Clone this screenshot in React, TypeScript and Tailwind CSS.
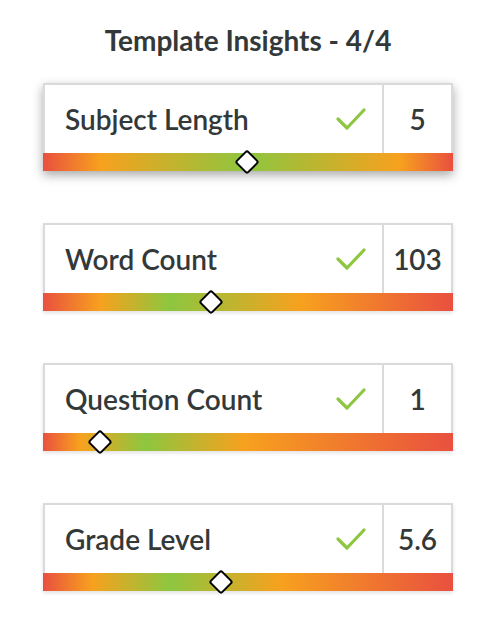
type Insight = {
  label: string;
  value: string;
  pos: number;
  gradient: string;
  active?: boolean;
};

const RED = "#e9503f";
const ORANGE = "#f7a11e";
const GREEN = "#8dc63f";

const insights: Insight[] = [
  {
    label: "Subject Length",
    value: "5",
    pos: 49.7,
    gradient: `linear-gradient(90deg, ${RED} 0%, ${ORANGE} 14%, ${GREEN} 50%, ${ORANGE} 87%, ${RED} 100%)`,
    active: true,
  },
  {
    label: "Word Count",
    value: "103",
    pos: 41,
    gradient: `linear-gradient(90deg, ${RED} 0%, ${ORANGE} 14%, ${GREEN} 31%, ${ORANGE} 63%, ${RED} 100%)`,
  },
  {
    label: "Question Count",
    value: "1",
    pos: 14,
    gradient: `linear-gradient(90deg, ${RED} 0%, ${ORANGE} 9%, ${GREEN} 25%, ${ORANGE} 49%, ${RED} 100%)`,
  },
  {
    label: "Grade Level",
    value: "5.6",
    pos: 43.4,
    gradient: `linear-gradient(90deg, ${RED} 0%, ${ORANGE} 12%, ${GREEN} 31%, ${ORANGE} 58%, ${RED} 100%)`,
  },
];

function CheckMark() {
  return (
    <svg width="32" height="24" viewBox="0 0 32 24" fill="none">
      <polyline
        points="3,12 12,21 29,3"
        stroke="#8dc63f"
        strokeWidth="3.2"
        strokeLinecap="round"
        strokeLinejoin="round"
      />
    </svg>
  );
}

function InsightCard({ item }: { item: Insight }) {
  return (
    <div
      className={`w-[410px] bg-white ${
        item.active
          ? "shadow-[0_4px_10px_rgba(0,0,0,0.35)]"
          : "shadow-[0_2px_4px_rgba(0,0,0,0.12)]"
      }`}
    >
      <div className="flex h-[70px] border-x-2 border-t-2 border-[#dadada]">
        <div className="flex flex-1 items-center justify-between pl-5 pr-[15px]">
          <span className="text-[28px] font-semibold text-[#333839]">
            {item.label}
          </span>
          <CheckMark />
        </div>
        <div className="flex w-[69px] items-center justify-center border-l-2 border-[#dadada]">
          <span className="text-[28px] font-semibold text-[#333839]">
            {item.value}
          </span>
        </div>
      </div>
      <div className="relative h-[18px]" style={{ background: item.gradient }}>
        <div
          className="absolute top-1/2 h-[18px] w-[18px] -translate-x-1/2 -translate-y-1/2 rotate-45 rounded-[3px] border-2 border-black bg-white"
          style={{ left: `${item.pos}%` }}
        />
      </div>
    </div>
  );
}

export default function App() {
  return (
    <main
      className="flex min-h-screen w-[496px] flex-col items-center bg-white pt-[22px]"
      style={{ fontFamily: "Lato, 'Open Sans', sans-serif" }}
    >
      <h1 className="text-[28px] font-bold leading-[36px] text-[#333839]">
        Template Insights - 4/4
      </h1>
      <div className="mt-[25px] flex flex-col gap-[52px]">
        {insights.map((item) => (
          <InsightCard key={item.label} item={item} />
        ))}
      </div>
    </main>
  );
}
